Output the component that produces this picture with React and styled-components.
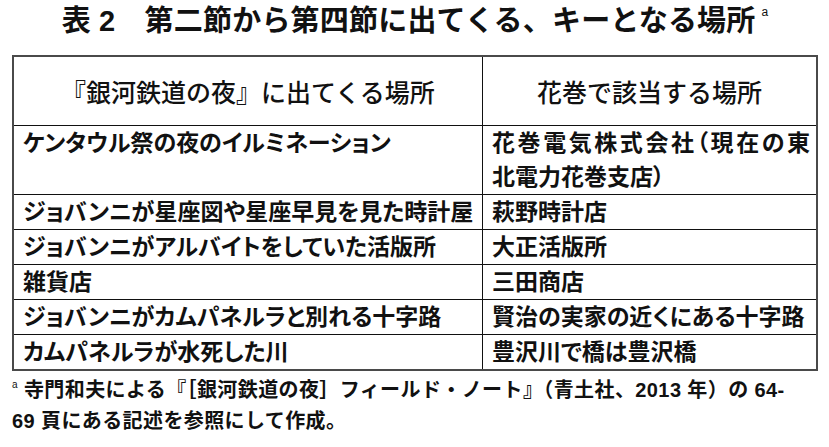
import React from "react";
import styled, { createGlobalStyle } from "styled-components";

const GlobalStyle = createGlobalStyle`
  html, body {
    margin: 0;
    padding: 0;
    background: #ffffff;
  }
  body {
    font-family: "Liberation Sans", "Noto Sans CJK JP", sans-serif;
    color: #111111;
  }
`;

const Page = styled.div`
  width: 829px;
  height: 447px;
  padding: 0 11px 0 12px;
  box-sizing: border-box;
  overflow: hidden;
`;

const Title = styled.h1`
  margin: 0 0 12px;
  height: 43px;
  line-height: 43px;
  text-align: center;
  font-size: 29px;
  font-weight: 700;
  letter-spacing: 0.2px;
  white-space: nowrap;
`;

const Sup = styled.sup`
  font-size: ${(p) => p.$size || 12}px;
  font-weight: 400;
  vertical-align: top;
  position: relative;
  top: ${(p) => p.$top || 0}px;
  margin-left: ${(p) => p.$gap || 0}px;
  line-height: 1;
`;

const Grid = styled.div`
  display: grid;
  grid-template-columns: 469px 1fr;
  border: 2px solid #4a4a4a;
  width: 806px;
  box-sizing: border-box;
`;

const HeadCell = styled.div`
  height: 68px;
  display: flex;
  align-items: center;
  justify-content: center;
  font-size: 25px;
  font-weight: 500;
  border-bottom: 1px solid #111;
  border-right: ${(p) => (p.$left ? "1px solid #111" : "none")};
`;

const Cell = styled.div`
  font-size: 23px;
  font-weight: 700;
  line-height: 34px;
  padding: 0 6px 0 9px;
  font-feature-settings: "palt";
  border-bottom: ${(p) => (p.$last ? "none" : "1px solid #111")};
  border-right: ${(p) => (p.$left ? "1px solid #111" : "none")};
  white-space: nowrap;
`;

const Line = styled.div`
  text-align: ${(p) => (p.$justify ? "justify" : "left")};
  text-align-last: ${(p) => (p.$justify ? "justify" : "auto")};
`;

const Footnote = styled.p`
  margin: 4px 0 0;
  font-size: 20px;
  font-weight: 700;
  line-height: 31px;
  letter-spacing: 0.4px;
  white-space: nowrap;
`;

const rows = [
  ["ケンタウル祭の夜のイルミネーション", ["花巻電気株式会社（現在の東", "北電力花巻支店）"]],
  ["ジョバンニが星座図や星座早見を見た時計屋", "萩野時計店"],
  ["ジョバンニがアルバイトをしていた活版所", "大正活版所"],
  ["雑貨店", "三田商店"],
  ["ジョバンニがカムパネルラと別れる十字路", "賢治の実家の近くにある十字路"],
  ["カムパネルラが水死した川", "豊沢川で橋は豊沢橋"],
];

export default function App() {
  return (
    <>
      <GlobalStyle />
      <Page>
        <Title>
          表 2　第二節から第四節に出てくる、キーとなる場所
          <Sup $top={6} $gap={6}>a</Sup>
        </Title>
        <Grid>
          <HeadCell $left>『銀河鉄道の夜』に出てくる場所</HeadCell>
          <HeadCell>花巻で該当する場所</HeadCell>
          {rows.map(([place, hanamaki], i) => {
            const last = i === rows.length - 1;
            return (
              <React.Fragment key={i}>
                <Cell $left $last={last}>{place}</Cell>
                {Array.isArray(hanamaki) ? (
                  <Cell $last={last}>
                    <Line $justify>{hanamaki[0]}</Line>
                    <Line>{hanamaki[1]}</Line>
                  </Cell>
                ) : (
                  <Cell $last={last}>{hanamaki}</Cell>
                )}
              </React.Fragment>
            );
          })}
        </Grid>
        <Footnote>
          <Sup $top={5} $size={10}>a</Sup> 寺門和夫による『［銀河鉄道の夜］フィールド・ノート』（青土社、2013 年）の 64-
          <br />
          69 頁にある記述を参照にして作成。
        </Footnote>
      </Page>
    </>
  );
}
